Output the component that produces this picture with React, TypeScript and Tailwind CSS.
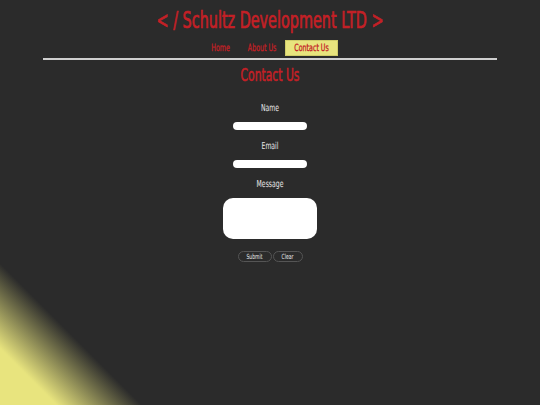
// condensed face stretched vertically to approach the tall narrow headline font
const tall = 'inline-block scale-y-[1.42]';

export default function App() {
  return (
    <div
      className="min-h-screen w-full bg-[#2b2b2b] text-white font-stretch-condensed bg-[linear-gradient(45deg,#e8e47e_6%,#2b2b2b_15%)]"
      style={{ fontFamily: '"DejaVu Sans", sans-serif' }}
    >
      <header className="flex flex-col items-center pt-[9px]">
        <h1 className="text-[16px] leading-[24px] text-[#c42026] [-webkit-text-stroke:0.5px_#c42026]">
          <span className={tall}>&lt; / Schultz Development LTD &gt;</span>
        </h1>
        <nav className="mt-[7px] flex items-center text-[7px] leading-[14px] text-[#c42026] [-webkit-text-stroke:0.2px_#c42026]">
          <a className="px-[9px]"><span className={tall}>Home</span></a>
          <a className="px-[9px]"><span className={tall}>About Us</span></a>
          <a className="bg-[#e8e47e] px-[8px] border border-[#d0cc6a]"><span className={tall}>Contact Us</span></a>
        </nav>
      </header>
      <div className="mx-[43px] mt-[2px] h-[1.5px] bg-[#cfcfcf]" />
      <main className="flex flex-col items-center">
        <h2 className="mt-[5px] text-[12px] leading-[20px] text-[#c42026] [-webkit-text-stroke:0.4px_#c42026]">
          <span className={tall}>Contact Us</span>
        </h2>
        <form className="mt-[18px] flex flex-col items-center text-[6.8px] leading-[10px] text-[#e8e8e8]">
          <label><span className={tall}>Name</span></label>
          <input className="mt-[9px] h-[8px] w-[74px] rounded-full bg-white" />
          <label className="mt-[11px]"><span className={tall}>Email</span></label>
          <input className="mt-[9px] h-[8px] w-[74px] rounded-full bg-white" />
          <label className="mt-[11px]"><span className={tall}>Message</span></label>
          <textarea className="mt-[9px] h-[41px] w-[94px] resize-none rounded-[10px] bg-white" />
          <div className="mt-[12px] flex gap-[1px] text-[5px]">
            <button type="button" className="h-[11px] w-[34px] rounded-full border border-[#555] bg-[#2b2b2b] text-[#eee] leading-[9px]"><span className={tall}>Submit</span></button>
            <button type="button" className="h-[11px] w-[30px] rounded-full border border-[#555] bg-[#2b2b2b] text-[#eee] leading-[9px]"><span className={tall}>Clear</span></button>
          </div>
        </form>
      </main>
    </div>
  );
}
